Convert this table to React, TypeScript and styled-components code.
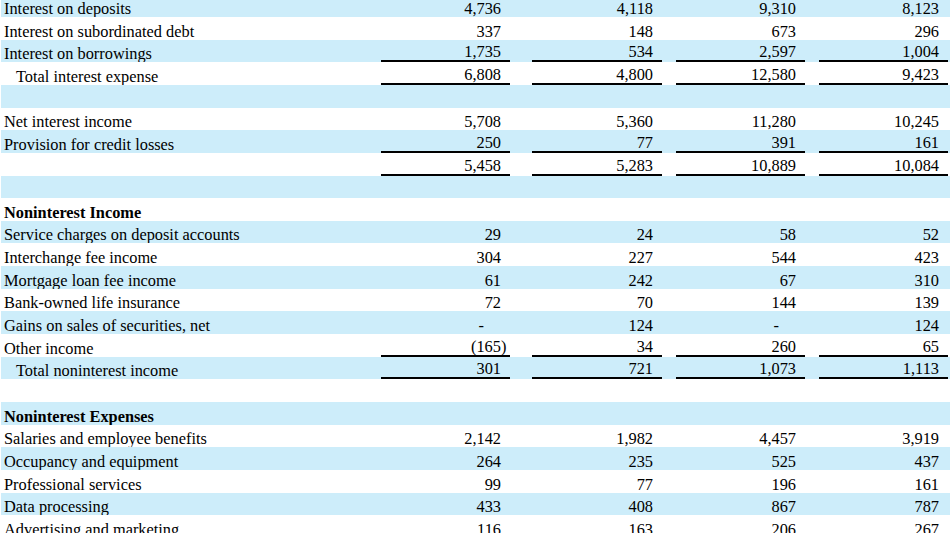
import React from "react";
import styled, { createGlobalStyle } from "styled-components";

const Global = createGlobalStyle`
  html, body {
    margin: 0;
    padding: 0;
    background: #ffffff;
    overflow: hidden;
  }
  body {
    font-family: "Liberation Serif", "Times New Roman", serif;
    color: #000;
  }
`;

const Sheet = styled.div`
  margin-top: -5.6px;
  margin-left: 1px;
  display: flex;
  flex-direction: column;
`;

const Row = styled.div<{ $shade: boolean }>`
  display: grid;
  grid-template-columns: 380px 129px 22px 130px 14px 129px 14px 129px 1fr;
  height: 22.65px;
  background: ${(p) => (p.$shade ? "#cdedfa" : "#ffffff")};
`;

const Cell = styled.div`
  display: flex;
  align-items: flex-end;
  box-sizing: border-box;
  font-size: 16.35px;
  line-height: 16px;
  padding-bottom: 0;
  white-space: nowrap;
`;

const Label = styled(Cell)<{ $indent?: boolean; $bold?: boolean }>`
  padding-left: ${(p) => (p.$indent ? "15px" : "3px")};
  font-weight: ${(p) => (p.$bold ? 700 : 400)};
`;

const Num = styled(Cell)<{ $line?: boolean; $kind?: "plain" | "neg" | "dash" }>`
  justify-content: flex-end;
  padding-right: ${(p) =>
    p.$kind === "neg" ? "3.6px" : p.$kind === "dash" ? "26px" : "9px"};
  border-bottom: ${(p) => (p.$line ? "2px solid #000" : "none")};
`;

const Gap = styled.div``;

type RowData = {
  label?: string;
  values?: string[];
  indent?: boolean;
  bold?: boolean;
  line?: boolean;
};

const rows: RowData[] = [
  { label: "Interest on deposits", values: ["4,736", "4,118", "9,310", "8,123"] },
  { label: "Interest on subordinated debt", values: ["337", "148", "673", "296"] },
  { label: "Interest on borrowings", values: ["1,735", "534", "2,597", "1,004"], line: true },
  { label: "Total interest expense", indent: true, values: ["6,808", "4,800", "12,580", "9,423"], line: true },
  {},
  { label: "Net interest income", values: ["5,708", "5,360", "11,280", "10,245"] },
  { label: "Provision for credit losses", values: ["250", "77", "391", "161"], line: true },
  { label: "", values: ["5,458", "5,283", "10,889", "10,084"], line: true },
  {},
  { label: "Noninterest Income", bold: true },
  { label: "Service charges on deposit accounts", values: ["29", "24", "58", "52"] },
  { label: "Interchange fee income", values: ["304", "227", "544", "423"] },
  { label: "Mortgage loan fee income", values: ["61", "242", "67", "310"] },
  { label: "Bank-owned life insurance", values: ["72", "70", "144", "139"] },
  { label: "Gains on sales of securities, net", values: ["-", "124", "-", "124"] },
  { label: "Other income", values: ["(165)", "34", "260", "65"], line: true },
  { label: "Total noninterest income", indent: true, values: ["301", "721", "1,073", "1,113"], line: true },
  {},
  { label: "Noninterest Expenses", bold: true },
  { label: "Salaries and employee benefits", values: ["2,142", "1,982", "4,457", "3,919"] },
  { label: "Occupancy and equipment", values: ["264", "235", "525", "437"] },
  { label: "Professional services", values: ["99", "77", "196", "161"] },
  { label: "Data processing", values: ["433", "408", "867", "787"] },
  { label: "Advertising and marketing", values: ["116", "163", "206", "267"] },
];

const kindOf = (v: string): "plain" | "neg" | "dash" =>
  v === "-" ? "dash" : v.startsWith("(") ? "neg" : "plain";

export default function App() {
  return (
    <>
      <Global />
      <Sheet>
        {rows.map((r, i) => {
          const vals = r.values ?? ["", "", "", ""];
          return (
            <Row key={i} $shade={i % 2 === 0}>
              <Label $indent={r.indent} $bold={r.bold}>
                {r.label ?? ""}
              </Label>
              {vals.map((v, j) => (
                <React.Fragment key={j}>
                  <Num $line={r.line} $kind={kindOf(v)}>
                    {v}
                  </Num>
                  <Gap />
                </React.Fragment>
              ))}
            </Row>
          );
        })}
      </Sheet>
    </>
  );
}
